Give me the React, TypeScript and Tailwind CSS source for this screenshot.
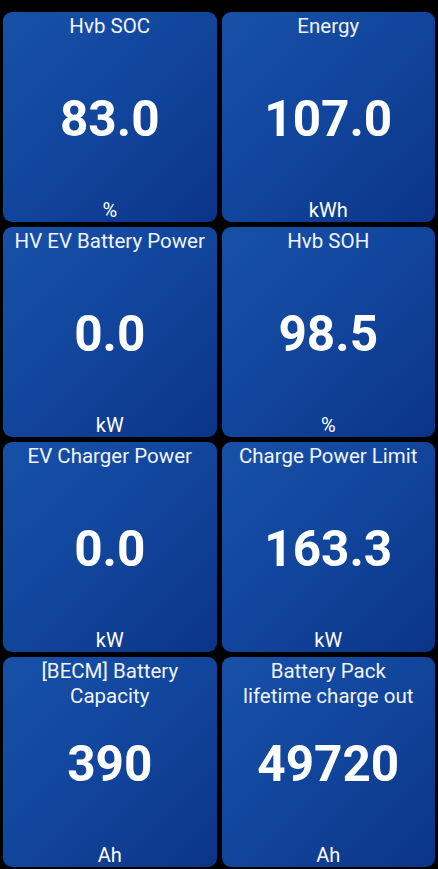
const gauges = [
  { title: "Hvb SOC", value: "83.0", unit: "%" },
  { title: "Energy", value: "107.0", unit: "kWh" },
  { title: "HV EV Battery Power", value: "0.0", unit: "kW" },
  { title: "Hvb SOH", value: "98.5", unit: "%" },
  { title: "EV Charger Power", value: "0.0", unit: "kW" },
  { title: "Charge Power Limit", value: "163.3", unit: "kW" },
  { title: "[BECM] Battery\nCapacity", value: "390", unit: "Ah" },
  { title: "Battery Pack\nlifetime charge out", value: "49720", unit: "Ah" },
];

function GaugeCard({ title, value, unit }: { title: string; value: string; unit: string }) {
  return (
    <div className="grid h-[210px] grid-rows-[1fr_auto_1fr] rounded-[9px] bg-gradient-to-br from-[#1850a8] via-[#11459c] to-[#0b3488] px-1 text-center text-white">
      <div className="self-start whitespace-pre-line pt-[2px] text-[20.5px] leading-[25px] text-[#f0f4fb]">
        {title}
      </div>
      <div className="pt-[6px] text-[49.5px] font-bold leading-none">{value}</div>
      <div className="self-end pb-0 text-[20px] leading-6">{unit}</div>
    </div>
  );
}

export default function App() {
  return (
    <div
      className="min-h-[869px] bg-black px-[3px] pt-[12px]"
      style={{ fontFamily: "Roboto, 'Noto Sans', sans-serif" }}
    >
      <div className="grid grid-cols-2 gap-[5px]">
        {gauges.map((g) => (
          <GaugeCard key={g.title} {...g} />
        ))}
      </div>
    </div>
  );
}
